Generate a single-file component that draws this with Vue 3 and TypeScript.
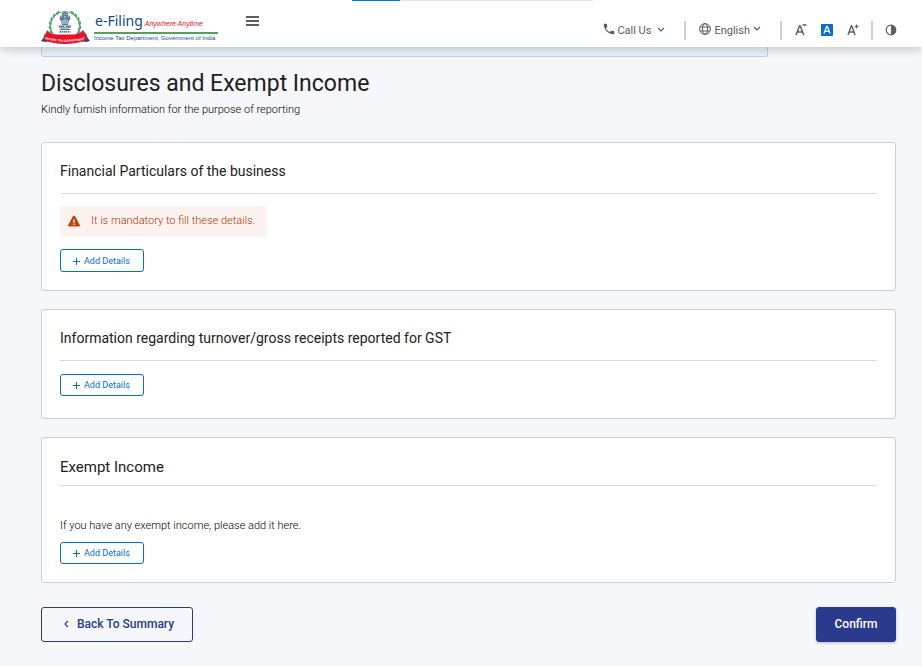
<script setup lang="ts">
import { ref } from 'vue'

interface Section {
  id: string
  title: string
  warning?: string
  note?: string
}

const sections: Section[] = [
  {
    id: 'financial',
    title: 'Financial Particulars of the business',
    warning: 'It is mandatory to fill these details.',
  },
  { id: 'gst', title: 'Information regarding turnover/gross receipts reported for GST' },
  { id: 'exempt', title: 'Exempt Income', note: 'If you have any exempt income, please add it here.' },
]

const progress = ref(20)
const leaves: number[] = [0, 1, 2, 3, 4, 5, 6, 7, 8]

function leafTransform(i: number, side: number): string {
  const degrees = 165 - i * 17
  const a = (degrees * Math.PI) / 180
  const x = 24 + side * 15 * Math.sin(a)
  const y = 17 - 15 * Math.cos(a)
  return `translate(${x.toFixed(2)} ${y.toFixed(2)}) rotate(${side * (degrees + 20)})`
}
</script>

<template>
  <div class="page">
    <header class="topbar">
      <div class="progress" role="progressbar" :aria-valuenow="progress">
        <div class="progress-value" :style="{ width: progress + '%' }"></div>
      </div>
      <a class="brand" href="#">
        <svg class="emblem" viewBox="0 0 50 36" aria-hidden="true">
          <g fill="#4aa668">
            <template v-for="i in leaves" :key="i">
              <ellipse rx="2.3" ry="1.2" :transform="leafTransform(i, -1)" />
              <ellipse rx="2.3" ry="1.2" :transform="leafTransform(i, 1)" />
            </template>
          </g>
          <circle cx="24" cy="17" r="14.5" fill="none" stroke="#58ad72" stroke-width="1" />
          <circle cx="24" cy="17" r="13" fill="#fff" />
          <g fill="#5d7b9b">
            <circle cx="24" cy="6.5" r="3.4" />
            <path d="M19.5 6.500q-2 3 1 6h7q3-3 1-6l-1.500 2h-6z" />
            <path d="M20 10h8l-.8 6h-6.400z" />
            <path d="M18 16.500h12v2.200H18z" />
            <path d="M20 19.500h8l2 1.500H18z" />
          </g>
          <path d="M22.500 5.500h1M25 5.500h1M23 8h2M22 11v4M24 10v5M26 11v4M23 17.600h2" stroke="#fff" stroke-width=".8" />
          <path d="M4 24l-1.500 5L0 32l4 1 4-1zM45 24l1 4 3 4-4 1-5-1z" fill="#174a86" />
          <path d="M6 21q3 4 9 4.500h18q6-.5 9-4.500l2 3 2 7q-22 8-44 0l3-7z" fill="#e5142b" />
          <path d="M18.500 22.800h11" stroke="#333" stroke-width="1.300" stroke-dasharray="1.500 .6" />
          <path id="ribbon" d="M4 30q20.500 5.500 41.500 0" fill="none" />
          <text class="ribbon-text"><textPath href="#ribbon">INCOME TAX DEPARTMENT</textPath></text>
        </svg>
        <span class="wordmark">
          <span class="wordmark-top"><span class="efiling">e-Filing</span><em>Anywhere Anytime</em></span>
          <span class="department">Income Tax Department, Government of India</span>
        </span>
      </a>
      <button class="plain menu" aria-label="Menu">
        <svg width="14" height="12" viewBox="0 0 14 12"><path d="M0 2h13M0 6h13M0 10h13" stroke="#5d5d5d" stroke-width="2" /></svg>
      </button>
      <nav class="tools" aria-label="Tools">
        <button class="plain call">
          <svg width="14" height="14" viewBox="0 0 24 24" class="raised"><path fill="#5d5d5d" d="M6.620 10.790c1.440 2.830 3.760 5.140 6.590 6.590l2.200-2.200c.27-.27.67-.36 1.020-.24 1.120.37 2.330.57 3.570.57.55 0 1 .45 1 1V20c0 .55-.45 1-1 1-9.390 0-17-7.610-17-17 0-.55.45-1 1-1h3.500c.55 0 1 .45 1 1 0 1.250.2 2.450.57 3.570.11.35.03.74-.25 1.020z" /></svg>
          <span>Call Us</span>
          <svg class="chevron" width="8" height="6" viewBox="0 0 8 6"><path d="M1 1l3 3 3-3" /></svg>
        </button>
        <span class="divider"></span>
        <button class="plain language">
          <svg width="12" height="12" viewBox="0 0 12 12" class="raised" fill="none" stroke="#5d5d5d"><circle cx="6" cy="6" r="5.400" /><ellipse cx="6" cy="6" rx="2.500" ry="5.400" /><path d="M1 4h10M1 8h10" /></svg>
          <span>English</span>
          <svg class="chevron raised" width="8" height="6" viewBox="0 0 8 6"><path d="M1 1l3 3 3-3" /></svg>
        </button>
        <span class="divider"></span>
        <div class="sizes">
          <button class="plain size" aria-label="Decrease text size">
            <svg width="12" height="14" viewBox="0 0 12 14" fill="none" stroke="#5d5d5d" stroke-width="1.500"><path d="M1 12l3.500-9h.8l3.500 9M2.200 9h5.400M7.500 2h4" /></svg>
          </button>
          <button class="plain size" aria-label="Default text size">
            <svg width="12" height="14" viewBox="0 0 12 14" fill="none"><rect y="1" width="12" height="12" rx="1" fill="#056dd3" /><path d="M3 10.500l2.700-7h.6l2.700 7M4 8.300h4" stroke="#fff" stroke-width="1.300" /></svg>
          </button>
          <button class="plain size" aria-label="Increase text size">
            <svg width="12" height="14" viewBox="0 0 12 14" fill="none" stroke="#5d5d5d"><path d="M1 12l3.200-9h.6L8 12M2 9h5" stroke-width="1.400" /><path d="M7.500 3.500h4M9.500 1.500v4" stroke-width="1.200" /></svg>
          </button>
        </div>
        <span class="divider"></span>
        <button class="plain contrast" aria-label="Toggle contrast">
          <svg width="12" height="12" viewBox="0 0 12 12"><circle cx="6" cy="6" r="4.800" fill="#fff" stroke="#5d5d5d" stroke-width="1.200" /><path d="M6 1a5 5 0 010 10z" fill="#5d5d5d" /></svg>
        </button>
      </nav>
    </header>

    <main class="content">
      <div class="banner"></div>
      <h1>Disclosures and Exempt Income</h1>
      <p class="intro">Kindly furnish information for the purpose of reporting</p>

      <div class="cards">
        <section v-for="s in sections" :key="s.id" class="card" :class="s.id">
          <h2>{{ s.title }}</h2>
          <p v-if="s.warning" class="warning">
            <svg width="12" height="12" viewBox="0 0 12 12" aria-hidden="true"><path d="M6 .5Q6.700.5 7 1l4.800 9q.5 1.500-.8 1.500H1q-1.300 0-.8-1.500L5 1Q5.300.5 6 .5z" fill="#bf450d" /><path d="M6 4.500V8M6 8.800v1.300" stroke="#fcf3f0" stroke-width="1.300" /></svg>
            <span>{{ s.warning }}</span>
          </p>
          <p v-if="s.note" class="note">{{ s.note }}</p>
          <button class="add">
            <svg width="7" height="7" viewBox="0 0 7 7" aria-hidden="true"><path d="M0 3.500h7M3.500 0v7" stroke="#056dd3" /></svg>
            <span>Add Details</span>
          </button>
        </section>
      </div>

      <footer class="actions">
        <button class="back">
          <svg width="5" height="8" viewBox="0 0 5 8" aria-hidden="true"><path d="M4 1L1 4l3 3" fill="none" stroke="#2a3a8d" stroke-width="1.200" /></svg>
          <span>Back To Summary</span>
        </button>
        <button class="confirm">Confirm</button>
      </footer>
    </main>
  </div>
</template>

<style>
body {
  margin: 0;
  background: #f5f7fb;
}
</style>

<style scoped>
.page {
  min-height: 100vh;
  box-sizing: border-box;
  background: #f5f7fb;
  color: #212121;
  font-family: Roboto, "Liberation Sans", sans-serif;
}
h1, h2, p {
  margin: 0;
}
button {
  font-family: inherit;
  cursor: pointer;
}
.plain {
  display: flex;
  align-items: center;
  padding: 0;
  border: 0;
  background: none;
  color: #5d5d5d;
  font-size: 11px;
  line-height: 16px;
}
.topbar {
  position: relative;
  z-index: 1;
  display: flex;
  box-sizing: border-box;
  height: 47px;
  padding: 0 25px 0 41px;
  background: #fff;
  box-shadow: 0 2px 10px rgba(0, 0, 0, 0.22);
}
.progress {
  position: absolute;
  top: 0;
  left: 352px;
  width: 241px;
  height: 1px;
  background: #e5e5e5;
}
.progress-value {
  height: 1px;
  background: #0778d8;
}
.brand {
  display: flex;
  align-items: flex-start;
  gap: 3px;
  padding-top: 9px;
  text-decoration: none;
}
.emblem {
  width: 50px;
  height: 36px;
}
.ribbon-text {
  fill: #fff;
  font-family: "Liberation Sans", sans-serif;
  font-size: 3px;
  font-weight: 700;
}
.wordmark {
  display: flex;
  flex-direction: column;
  width: 124px;
  padding-top: 4px;
  white-space: nowrap;
}
.wordmark-top {
  display: flex;
  align-items: baseline;
  gap: 2px;
  padding-left: 1px;
  border-bottom: 2px solid #4fa35f;
  line-height: 16px;
}
.efiling {
  color: #124a86;
  font-family: "Noto Sans", sans-serif;
  font-size: 14px;
}
.wordmark em {
  color: #e5142b;
  font-family: "Liberation Sans", sans-serif;
  font-size: 7px;
}
.department {
  color: #124a86;
  font-family: "Liberation Sans", sans-serif;
  font-size: 6px;
  line-height: 9px;
}
.menu {
  align-self: flex-start;
  margin: 15px 0 0 28px;
}
.tools {
  display: flex;
  align-items: center;
  height: 20px;
  margin: 20px 0 0 auto;
}
.plain span {
  padding-top: 1px;
}
.raised {
  margin-bottom: 3px;
}
.chevron {
  fill: none;
  stroke: #5d5d5d;
  stroke-width: 1.2;
}
.call {
  gap: 1px;
}
.call .chevron {
  margin-left: 5px;
}
.language {
  gap: 3px;
}
.divider {
  width: 2px;
  height: 19px;
  margin: 0 13px 0 19px;
  background: #cfcfcf;
}
.sizes {
  display: flex;
  gap: 14px;
}
.sizes + .divider {
  margin: 0 12px;
}
.content {
  padding: 0 26px 24px 41px;
}
.banner {
  box-sizing: border-box;
  width: 85%;
  height: 10px;
  border: 1px solid #c6d1ef;
  border-top: 0;
  border-radius: 0 0 3px 3px;
  background: #eaf3fc;
}
h1 {
  padding-top: 13px;
  font-size: 23px;
  font-weight: 400;
  line-height: 28px;
}
.intro,
.note {
  color: #000;
  font-size: 11px;
  font-weight: 300;
  line-height: 16px;
}
.intro {
  padding-top: 4px;
}
.cards {
  display: flex;
  flex-direction: column;
  gap: 18px;
  padding-top: 24px;
}
.card {
  display: flex;
  flex-direction: column;
  align-items: flex-start;
  padding: 18px;
  border: 1px solid #c9cce3;
  border-radius: 3px;
  background: #fff;
}
.gst {
  padding-bottom: 22px;
}
.exempt {
  padding-top: 19px;
}
.card h2 {
  align-self: stretch;
  padding-bottom: 12px;
  margin-bottom: 13px;
  border-bottom: 1px solid #d8d9e6;
  font-size: 14px;
  font-weight: 400;
  line-height: 20px;
}
.card.financial h2 {
  margin-bottom: 12px;
}
.card.exempt h2 {
  padding-bottom: 8px;
  margin-bottom: 32px;
  font-size: 15px;
}
.warning {
  display: flex;
  align-items: center;
  gap: 11px;
  margin-bottom: 12px;
  padding: 7px 12px 8px 8px;
  border-radius: 3px;
  background: #fcf3f0;
  color: #a83500;
  font-size: 11px;
  font-weight: 300;
  line-height: 16px;
}
.note {
  margin-bottom: 8px;
}
.add {
  display: flex;
  align-items: center;
  gap: 4px;
  padding: 3px 13px 3px 12px;
  border: 1px solid #056dd3;
  border-radius: 3px;
  background: #fff;
  color: #056dd3;
  font-size: 9px;
  font-weight: 400;
  line-height: 14px;
}
.financial .add {
  padding-top: 4px;
}
.actions {
  display: flex;
  justify-content: space-between;
  padding-top: 24px;
}
.back,
.confirm {
  display: flex;
  align-items: center;
  gap: 8px;
  padding: 7px 18px 8px;
  border: 1px solid #2a3a8d;
  border-radius: 3px;
  font-size: 12px;
  font-weight: 500;
  line-height: 18px;
}
.back {
  padding-left: 22px;
  background: transparent;
  color: #2a3a8d;
}
.confirm {
  justify-content: center;
  min-width: 80px;
  padding: 7px 17px 8px;
  background: #2a3a8d;
  color: #fff;
  box-shadow: 0 1px 3px rgba(0, 0, 0, 0.25);
}
</style>
